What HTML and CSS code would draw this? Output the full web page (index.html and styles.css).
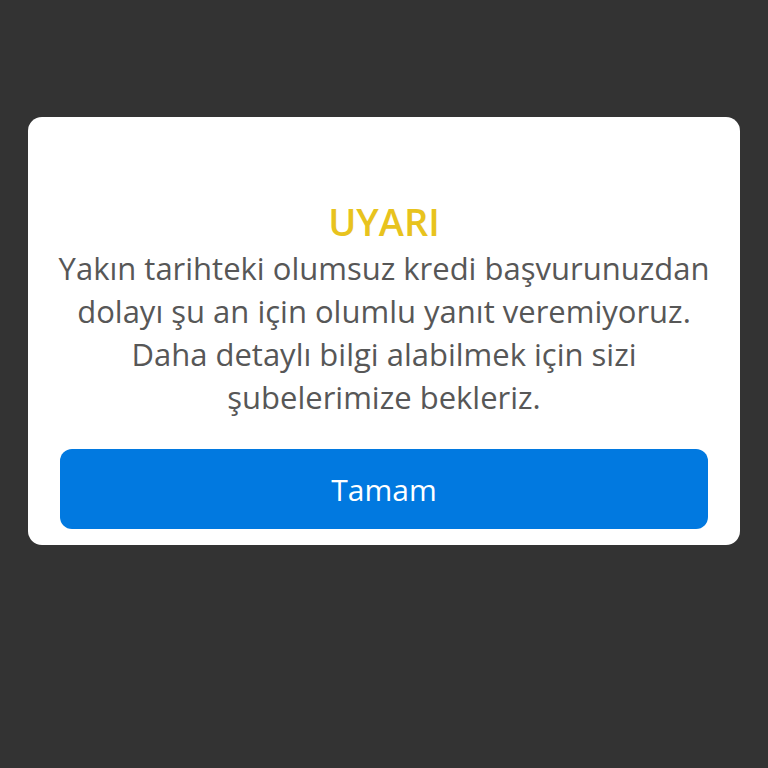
FILE: index.html
```html
<!DOCTYPE html>
<html lang="tr">
<head>
    <meta charset="UTF-8">
    <meta name="viewport" content="width=device-width, initial-scale=1.0">
    <title>Uyarı</title>
    <link rel="stylesheet" href="styles.css">
</head>
<body>
    <div class="overlay">
        <div class="dialog">
            <div class="dialog-title">UYARI</div>
            <div class="dialog-message">
                Yakın tarihteki olumsuz kredi başvurunuzdan dolayı şu an için olumlu yanıt veremiyoruz.<br>
                Daha detaylı bilgi alabilmek için sizi şubelerimize bekleriz.
            </div>
            <button class="dialog-button">Tamam</button>
        </div>
    </div>
</body>
</html>
```

FILE: styles.css
```css
html, body {
    margin: 0;
    padding: 0;
    height: 100%;
}

body {
    font-family: 'Open Sans', 'Noto Sans', sans-serif;
    background-color: #333333;
}

.overlay {
    padding: 117px 28px 0 28px;
}

.dialog {
    background: white;
    border-radius: 14px;
    padding: 82px 32px 16px 32px;
    text-align: center;
}

.dialog-title {
    font-size: 38px;
    font-weight: 600;
    color: #e8c31e;
    line-height: 44px;
}

.dialog-message {
    font-size: 31px;
    line-height: 43px;
    color: #575757;
    margin: 4px -16px 30px -16px;
}

.dialog-button {
    display: block;
    width: 100%;
    height: 80px;
    border: none;
    border-radius: 12px;
    background-color: #0179e0;
    color: white;
    font-family: inherit;
    font-size: 30px;
}
```
